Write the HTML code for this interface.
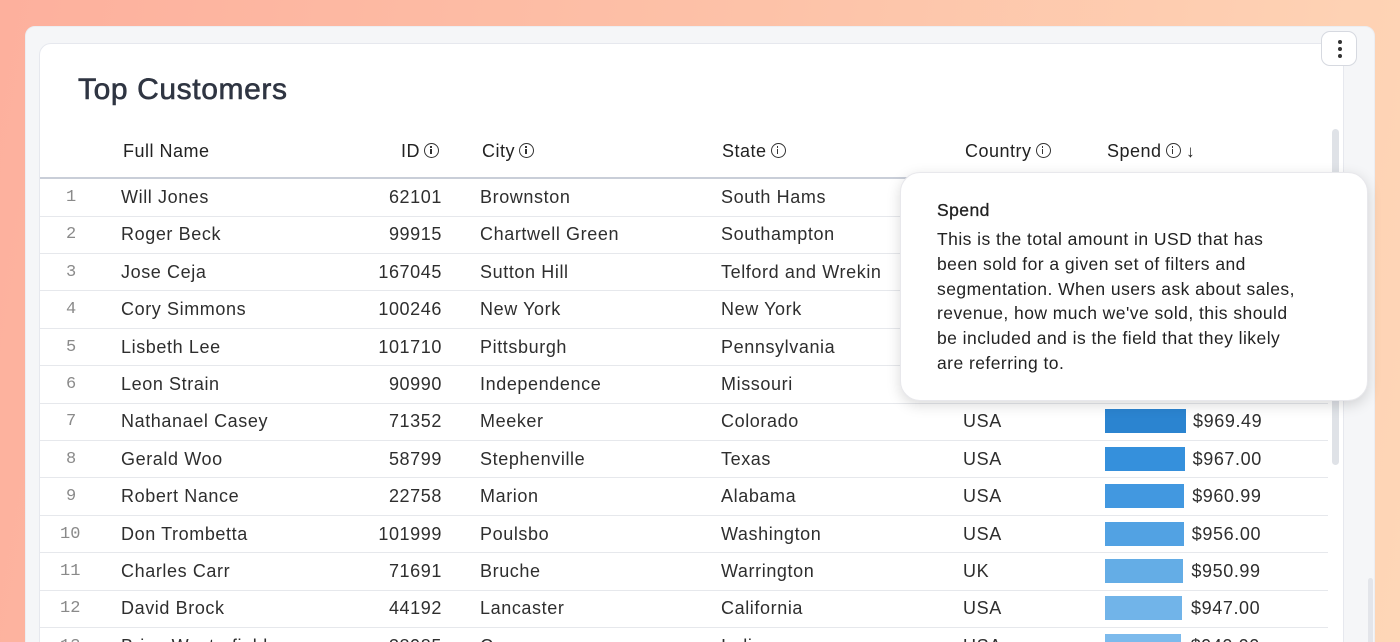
<!DOCTYPE html>
<html><head><style>
*{margin:0;padding:0;box-sizing:border-box}
html,body{width:1400px;height:642px;overflow:hidden}
body{font-family:"Liberation Sans",sans-serif}
#w{position:relative;width:1400px;height:642px;overflow:hidden;background:linear-gradient(100deg,#fdb09d 0%,#fdc2a8 50%,#fed6b7 100%);}
.outer{position:absolute;left:25px;top:26px;width:1350px;height:640px;background:#f5f6f8;border-radius:10px;border:1px solid #eceef2}
.inner{position:absolute;left:39px;top:43px;width:1305px;height:620px;background:#fff;border-radius:12px;border:1px solid #e6e8ee;overflow:hidden}
h1{position:absolute;left:78px;top:73px;font-size:30px;font-weight:normal;color:#2f3542;-webkit-text-stroke:.6px #2f3542;letter-spacing:.6px}
.menu{position:absolute;left:1321px;top:31px;width:36px;height:35px;border:1px solid #d6d9e0;border-radius:9px;background:#fff}
.menu i{position:absolute;left:16px;width:4px;height:4px;border-radius:50%;background:#333}
.t{position:absolute;font-size:18px;color:#2e2e2e;white-space:nowrap;letter-spacing:.6px}
.h{position:absolute;font-size:18px;color:#222;top:141px;white-space:nowrap;letter-spacing:.5px}
.info{display:inline-block;width:15px;height:15px;border:1.5px solid #333;border-radius:50%;position:relative;vertical-align:-1px;margin-left:4px}
.info:after{content:"";position:absolute;left:5px;top:5px;width:1.8px;height:5px;background:#333}
.info:before{content:"";position:absolute;left:5px;top:2px;width:1.8px;height:1.8px;background:#333}
.line{position:absolute;left:40px;width:1288px;height:1px;background:#e6e8ec}
.idx{position:absolute;font-family:"Liberation Mono",monospace;font-size:17px;color:#8a8a8a}
.bar{position:absolute;left:1105px;height:24px}
.tip{position:absolute;left:900px;top:172px;width:468px;height:229px;background:#fff;border-radius:20px;box-shadow:0 4px 14px rgba(0,0,0,.15);border:1px solid #e8e8ec;padding:26px 50px 26px 36px;font-size:17.5px;color:#222;line-height:24.8px;letter-spacing:.45px}
.sb{position:absolute;left:1332px;top:129px;width:7px;height:336px;background:#dfe2e7;border-radius:4px}
</style></head><body><div id="w">
<div class="outer"></div>
<div class="inner"></div>
<div style="position:absolute;left:1368px;top:578px;width:5px;height:70px;background:#e3e5ea;border-radius:3px"></div>
<h1>Top Customers</h1>
<div class="menu"><i style="top:8px"></i><i style="top:15px"></i><i style="top:22px"></i></div>
<div class="sb"></div>
<div class="h" style="left:123px">Full Name</div>
<div class="h" style="left:401px">ID<span class="info"></span></div>
<div class="h" style="left:482px">City<span class="info"></span></div>
<div class="h" style="left:722px">State<span class="info"></span></div>
<div class="h" style="left:965px">Country<span class="info"></span></div>
<div class="h" style="left:1107px">Spend<span class="info"></span> <span style="font-size:17px">↓</span></div>
<div class="line" style="top:177px;height:1.5px;background:#c9ced8"></div>
<div id="rows"></div>
<script>
var d=[["Will Jones","62101","Brownston","South Hams","",""],["Roger Beck","99915","Chartwell Green","Southampton","",""],["Jose Ceja","167045","Sutton Hill","Telford and Wrekin","",""],["Cory Simmons","100246","New York","New York","",""],["Lisbeth Lee","101710","Pittsburgh","Pennsylvania","",""],["Leon Strain","90990","Independence","Missouri","",""],["Nathanael Casey","71352","Meeker","Colorado","USA","$969.49"],["Gerald Woo","58799","Stephenville","Texas","USA","$967.00"],["Robert Nance","22758","Marion","Alabama","USA","$960.99"],["Don Trombetta","101999","Poulsbo","Washington","USA","$956.00"],["Charles Carr","71691","Bruche","Warrington","UK","$950.99"],["David Brock","44192","Lancaster","California","USA","$947.00"],["Brian Westerfield","38985","Cuero","Indiana","USA","$940.00"]];
var cols=["#2b84d0","#3590dc","#4298e0","#52a2e3","#64ade6","#71b4e9","#7cbaec"];
var h="";
for(var i=0;i<d.length;i++){var c=197+i*37.4;var t=c-10;
h+='<div class="idx" style="left:'+(i<9?66:60)+'px;top:'+(t+1)+'px">'+(i+1)+'</div>';
h+='<div class="t" style="left:121px;top:'+t+'px">'+d[i][0]+'</div>';
h+='<div class="t" style="right:'+(1400-442)+'px;top:'+t+'px">'+d[i][1]+'</div>';
h+='<div class="t" style="left:480px;top:'+t+'px">'+d[i][2]+'</div>';
h+='<div class="t" style="left:721px;top:'+t+'px">'+d[i][3]+'</div>';
h+='<div class="t" style="left:963px;top:'+t+'px">'+d[i][4]+'</div>';
if(d[i][5]){var k=i-6;h+='<div class="bar" style="top:'+(c-12)+'px;width:'+(81-k*0.8)+'px;background:'+cols[k]+'"></div>';
h+='<div class="t" style="left:'+(1193-k*0.4)+'px;top:'+t+'px">'+d[i][5]+'</div>';}
if(i<12)h+='<div class="line" style="top:'+Math.round(c+18.5)+'px"></div>';}
document.getElementById("rows").innerHTML=h;
</script>
<div class="tip"><div style="-webkit-text-stroke:.3px #222;margin-bottom:6px;line-height:22px">Spend</div>This is the total amount in USD that has<br>been sold for a given set of filters and<br>segmentation. When users ask about sales,<br>revenue, how much we've sold, this should<br>be included and is the field that they likely<br>are referring to.</div>
</div></body></html>
